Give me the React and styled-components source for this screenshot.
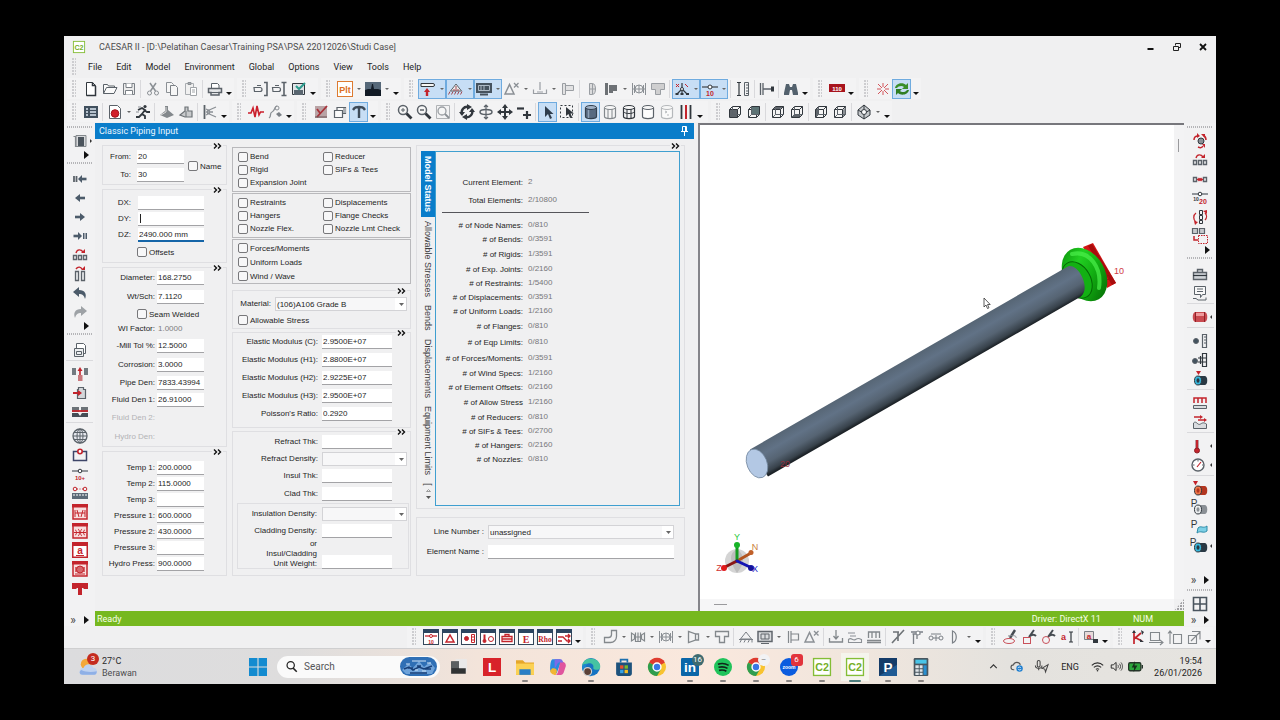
import React from "react";
import styled, { createGlobalStyle, css } from "styled-components";

const c = {
  face: "#f0f0f1",
  ink: "#1e1e1e",
  line: "#dcdcdf",
  blue: "#0a7dca",
  green: "#76b81f",
  red: "#c3242c",
  steel: "#5b6269",
  dark: "#31373d",
};
const ui = `Roboto, "Noto Sans", sans-serif`;
const form = `"Liberation Sans", Arial, sans-serif`;

const Global = createGlobalStyle`
  *, *::before, *::after { box-sizing: border-box; }
  body { margin: 0; background: #000; font-family: ${ui}; font-size: 9px; color: ${c.ink}; }
  button, input, select { font: inherit; color: inherit; margin: 0; }
  button { border: 0; background: none; padding: 0; }
`;

/* ---------- icon drawings, 16 x 16 ---------- */
const P = (d, stroke = c.steel, w = 1, fill = "none") => (
  <path d={d} stroke={stroke} strokeWidth={w} fill={fill} />
);
const F = (d, fill = c.steel) => <path d={d} fill={fill} stroke="none" />;
const O = (cx, cy, r, stroke = c.steel, fill = "none", w = 1) => (
  <circle cx={cx} cy={cy} r={r} stroke={stroke} fill={fill} strokeWidth={w} />
);
const T = (x, y, size, fill, text, weight = 700, family = form) => (
  <text x={x} y={y} fontSize={size} fill={fill} fontWeight={weight} fontFamily={family} textAnchor="middle" stroke="none">{text}</text>
);
const cube = (shade) => (
  <>
    {P("M2.500 5.500h8v8h-8zM2.500 5.500l3-3h8l-3 3M13.500 2.500v8l-3 3", c.dark, 1, "#f4f4f4")}
    {shade === "front" && F("M3 6h7v7H3z", "#5f656b")}
    {shade === "back" && F("M6 3h7v7H6z", "#5d7375")}
    {shade === "top" && F("M3 5l3-2h7l-3 2z", "#5f656b")}
    {shade === "bottom" && F("M3 13l2.500-3h7.500l-3 3z", "#5f656b")}
    {shade === "left" && F("M3 6l2.500-3v7L3 13z", "#5f656b")}
    {shade === "right" && F("M11 6l2.500-3v7L11 13z", "#8b9095")}
    {P("M5.500 3v7.500h8M5.500 10.500l-3 3", c.steel, 1)}
  </>
);
const cylinder = (fill, stroke, extra) => (
  <>
    {P("M2.500 3.500v9c0 2.700 11 2.700 11 0v-9", stroke, 1.200, fill)}
    <ellipse cx="8" cy="3.500" rx="5.500" ry="2" stroke={stroke} fill={fill === "#586a80" ? "#9fb0c4" : "#f7f7f7"} />
    {extra}
  </>
);
const lens = (extra) => (
  <>
    {O(6, 6, 4.500, c.steel, "#f6f6f6", 1.500)}
    {P("M9.500 9.500L14.500 14.500", c.dark, 2.800)}
    {extra}
  </>
);
const framed = (inner) => (
  <>
    <rect x="0.500" y="0.500" width="15" height="15" fill="#fff" stroke="#33475a" />
    {F("M0 0h16v4H0z", "#2c4560")}
    {inner}
  </>
);
const redFrame = (inner) => (
  <>
    <rect x="1" y="1" width="14" height="14" fill="#f8dede" stroke={c.red} strokeWidth="1.500" />
    {F("M0 0h16v3.500H0z", c.red)}
    {inner}
  </>
);
const can = (body, face) => (
  <>
    {F("M6 5h7c3 0 3 9 0 9H6z", body)}
    <ellipse cx="6" cy="9.500" rx="3.500" ry="4.500" fill={face} stroke={c.dark} />
    <ellipse cx="6" cy="9.500" rx="1.500" ry="2.200" fill={body} />
  </>
);

const icons = {
  fresh: <>{P("M3.500 1.500h6l3 3v10h-9z", c.dark, 1, "#fff")}{P("M9.500 1.500v3h3M12.500 5v9.500h-9", c.dark, 1.500)}</>,
  open: <>{P("M1.500 12.500v-9h4l1 1.500h6v2M1.500 12.500l3-6h10.500l-3 6z", c.steel, 1, "#fafafa")}</>,
  save: <>{P("M2.500 2.500h11v11h-11z", "#7b8086", 1, "#ececec")}{P("M5 2.500v4h6v-4M4.500 13.500v-4h7v4", "#7b8086", 1, "#fff")}</>,
  cut: <>{P("M5 2l5.500 8M11 2L5.500 10", "#8b9095", 1.500)}{O(4.500, 12, 2, "#8b9095")}{O(11.500, 12, 2, "#8b9095")}</>,
  copy: <>{P("M2.500 1.500h5l2 2v8h-7z", "#8b9095", 1, "#f6f6f6")}{P("M6.500 4.500h5l2 2v8h-7z", "#7b8086", 1, "#f6f6f6")}</>,
  paste: <>{P("M2.500 2.500h8v11h-8z", "#a9adb1", 1, "#f0f0f0")}{P("M5 1.500h3v2H5z", "#8b9095", 1)}{P("M7.500 6.500h6v8h-6zM9 9h3M9 11h3", "#a0a4a8", 1, "#fff")}</>,
  print: <>{P("M4.500 7V2.500h6l1.500 1.500v3", c.steel, 1, "#fff")}{P("M1.500 7.500h13v4h-2.500v2.500h-8v-2.500H1.500z", c.steel, 1.500, "#e4e6e8")}{P("M4 11.500h8", c.steel)}</>,
  nodeA: <>{P("M1 6.500h6a2 2 0 010 4H1.500zM4 4.500h4", c.steel, 1.200)}{P("M11 1.500h3v13H11", c.steel, 1.600)}</>,
  nodeB: <>{P("M0.500 6.500h6a2 2 0 010 4H1zM3 4.500h4", c.steel, 1.200)}{P("M9.500 1.500h5M9.500 14.500h5M12 1.500v13", c.steel, 1.600)}</>,
  check: <>{P("M1.500 2.500h12v11h-12z", c.dark, 1, "#dfe3e6")}{F("M3 9h9v5H3z", "#5a6670")}{P("M5 5l3 3 6-6", "#2b9c8d", 2)}</>,
  plt: <><rect x="0.500" y="0.500" width="15" height="15" fill="#fff" stroke="#dd7a31" />{T(8, 12, 9, "#dd6f22", "Plt")}</>,
  rig: <>{F("M0 1h16v14H0z", "#566879")}{F("M0 9l3-1 3 0 1-5h1l1 5 4 0 3 1v6H0z", "#121b26")}</>,
  support: <>{P("M1 2.500h12a1.500 1.500 0 010 3H1z", c.dark, 1, "#f6f6f6")}{F("M7 7l3 4H8.200v4H5.800v-4H4z", c.red)}</>,
  anchor: <>{P("M8 3l5.500 7h-11z", c.steel, 1, "#eee")}{P("M2 10.500l-1.500 3M5 10.500l-1.500 3M8 10.500l-1.500 3M11 10.500l-1.500 3M14 10.500l-1.500 3M8 5v5M6 8v2M10 8v2", "#a04852", 1)}</>,
  display: <>{F("M0 2h16v10H0z", "#46535f")}{P("M2.500 4.500h11v5h-11zM5 4v6M8 4v6", "#aebbc7", 1)}{P("M4 13.500h8", "#46535f", 2)}</>,
  delta: <>{P("M1 13l4.500-9.500L10 13z", "#8b9095", 1.500)}{P("M10 2l4.500 4.500M14.500 2l-4.500 4.500", "#8b9095", 1.300)}</>,
  hanger: <>{P("M8 1v8M1.500 8.500v4h13v-4M5 11h6", "#9a9ea3", 1.200)}</>,
  tee: <>{P("M2.500 2.500h3v11h-3zM5.500 4.500h8v5h-8z", "#9a9ea3", 1, "#e2e2e3")}</>,
  disc: <>{P("M5.500 2.500h3c4 0 4 11 0 11h-3z", "#9a9ea3", 1, "#dcdcdd")}{P("M5.500 8h6M8.500 2.500v11", "#9a9ea3")}</>,
  elbow: <>{F("M2 2h3v12H2zM6 4h8v6h-4v2H6z", "#6d7175")}</>,
  joint: <>{P("M1.500 2v12M14.500 2v12M3.500 4v8M12.500 4v8", "#8b9095")}{O(8, 8, 4, "#8b9095")}{P("M4 8h8M8 4v8M2 8h1M13 8h1", "#8b9095")}</>,
  teeDown: <>{P("M1.500 2.500h13v6h-4v5h-5v-5h-4z", "#9a9ea3", 1, "#cfcfd0")}</>,
  axes: <>{P("M8 8V2M8 8l-5 5M8 8l5 5M8 8v5", c.dark, 1.200)}{O(8, 8, 1.500, c.dark, "#fff")}{P("M2 3l3 3M5 3L2 6M11 3l3 3", c.red, 1)}{F("M6.500 12h3v2h-3zM1.500 12h3v2h-3zM12 12h3v2h-3z", c.dark)}</>,
  node: <>{P("M0 6h16", c.steel, 1.500)}{O(8, 6, 2, c.dark, "#fff")}{T(8, 15, 7, c.red, "10")}</>,
  ruler: <>{P("M2 1.500h4M2 14.500h4M4 2v12", c.dark, 1.200)}{P("M9.500 1.500h4v13h-4zM11 4h2.500M11 7h2.500M11 10h2.500M11 12.500h2.500", c.steel)}</>,
  valve: <>{P("M1.500 2v12M4 2v12M4 8h9", c.steel, 1.300)}{F("M12 5.500h3v5h-3z", c.dark)}</>,
  find: <>{F("M3 3h3l1 3h2l1-3h3l2 9v2h-5l-1-5H7l-1 5H1v-2z", "#53616d")}</>,
  plate: <>{F("M0 3h16v8H0z", "#a8141d")}{T(8, 9.500, 6, "#fff", "110")}</>,
  burst: <>{P("M8 2v4M8 10v4M2 8h4M10 8h4M3 3l4 4M9 9l4 4M13 3L9 7M7 9l-4 4", "#d3545a", 1)}</>,
  refresh: <>{F("M1 7c1-5 8-6 11-3l2-2v6H8l2-2C8 4 4 5 3 7z", "#3b8f2a")}{F("M15 9c-1 5-8 6-11 3l-2 2V8h6l-2 2c2 2 6 1 7-1z", "#2f7d22")}</>,
  list: <>{F("M1 2h14v12H1z", "#41505e")}{P("M3 5h2M7 5h6M3 8h2M7 8h6M3 11h2M7 11h6", "#dbe6f2", 1.300)}</>,
  record: <>{P("M2.500 1.500h8l3 3v10h-11z", c.steel, 1, "#fff")}{O(8, 9.500, 3.800, "#a3141c", "#d21f2a")}</>,
  run: <>{O(10, 2.500, 1.600, "none", c.dark)}{P("M3 6l4-2 3 2-3 4 3 2v3M7 10l-3 3H1M9 6l3 2h3", c.dark, 1.800)}{P("M6 3H3M4 8H1", "#8b9095", 1.200)}</>,
  hopper: <>{F("M6 2h3v4l6 5-7 3-7-3 5-4z", "#83888c")}{P("M7 3v5l-5 3", "#d8d8d8")}</>,
  hopperB: <>{P("M2 11l5-4V3h3v4h4v6H7z", "#6d7276", 1.200, "#c8cacc")}{P("M8 7v6", "#6d7276")}</>,
  brush: <>{P("M2.500 1v14", c.steel, 1.800)}{P("M4 8h7M5 7l9-4M5 9l9 4M4 5l4 2M4 11l4-2", "#8b9095", 1.300)}</>,
  pulse: <>{P("M0 9h3l2-5 2 9 2-11 2 9 1.500-3H16", "#cb1f2c", 1.600)}</>,
  probe: <>{P("M2 14c3-2 0-5 3-6s2-5 5-6", "#8b9095", 1.300)}{O(10, 4, 2, "#8b9095")}{F("M9 10l3-2 3 3-3 2z", "#7b8086")}</>,
  sketch: <>{F("M2 2h12v12H2z", "#b9a4a6")}{P("M4 13L14 2M4 5l3 4", "#a8323a", 1.800)}{P("M2 13h12", "#6b5557")}</>,
  boxes: <>{P("M2.500 6.500h8v7h-8zM5 6.500V3.500h8.500v6h-3", c.steel, 1.200, "#fafafa")}{F("M11 4h3v5h-3z", "#a9adb1")}</>,
  tpost: <>{P("M2 6c2-3 3-3 6-3s4 0 6 3M8 3v11", "#3d4a58", 2.400)}</>,
  zoomFit: lens(P("M4 6h4M6 4v4", c.steel)),
  zoomOut: lens(P("M4 6h4", c.steel, 1.500)),
  zoomBox: <>{P("M1.500 1.500h13v13h-13z", "#b0b3b6", 1)}{O(7, 7, 4, "#9a9ea3", "#f6f6f6", 1.300)}{P("M10 10l4 4", "#8b9095", 1.800)}</>,
  rotate: <>{P("M3 10A5.500 5.500 0 019 2.800M13 6a5.500 5.500 0 01-6 7.200", c.dark, 2.400)}{F("M8 0l5 3-5 3zM8 10l-5 3 5 3zM0 8h6L3 12zM16 8h-6l3-4z", c.dark)}</>,
  spin: <>{P("M8 1v14M6 3l2-2 2 2M6 13l2 2 2-2", c.steel, 1.200)}<ellipse cx="8" cy="8" rx="6" ry="2.500" stroke={c.steel} strokeWidth="1.500" /></>,
  move: <>{P("M8 3v10M3 8h10", c.dark, 2)}{F("M8 0l3 4H5zM8 16l3-4H5zM0 8l4-3v6zM16 8l-4-3v6z", c.dark)}</>,
  plusMinus: <>{P("M1 4.500h7", c.dark, 2.200)}{P("M7 11h8M11 7v8", c.dark, 2.200)}</>,
  pointer: <>{F("M5 2v11l3-3 2 5 2-1-2-4h3.500z", "#2f3d4c")}</>,
  marquee: <><rect x="1.500" y="1.500" width="12" height="12" stroke={c.dark} strokeDasharray="2 2" />{F("M7 3v9l2.500-2 1.500 4 2-1-1.500-3.500H15z", c.dark)}</>,
  shaded: cylinder("#586a80", "#34414f", P("M5.500 6v8", "#8fa2b8", 1.500)),
  hidden: cylinder("#f4f4f4", "#83888c", P("M6 5v9M10 5v9", "#83888c")),
  wire: cylinder("none", c.dark, P("M6 5v9M10 5v9M3 8c1 2 9 2 10 0", c.dark)),
  outline: cylinder("#fdfdfd", c.steel, null),
  ghost: cylinder("#fafafa", "#b5b8bb", P("M6 7l2 1-2 1M8 11h2", "#b5b8bb")),
  bars: <>{P("M3.500 1v14M12.500 1v14", c.dark, 1.800)}{P("M8 1v14", c.red, 2)}</>,
  cubeFront: cube("front"),
  cubeBack: cube("back"),
  cubeTop: cube("top"),
  cubeBottom: cube("bottom"),
  cubeLeft: cube("left"),
  cubeRight: cube("right"),
  iso: <>{P("M8 1l6 5v5l-6 4-6-4V6z", c.dark, 1, "#c6c9cc")}{O(8, 8, 2.500, c.dark, "#fff")}{P("M8 1v4M2 6l3.500 2M14 6l-3.500 2M8 11v4", c.dark)}</>,

  column: <>{P("M4 2.500h10v11H4z", "#83888c", 1, "#d6d8da")}{F("M6 4h6v9H6z", "#4b545c")}{P("M1.500 3.500h2v10h8", "#83888c", 1.200)}</>,
  first: <>{P("M2 5v6M4.500 5v6", c.steel, 1.800)}{P("M8 8h6.500", "#4c5b6a", 2.600)}{F("M6 8l4-4v8z", "#4c5b6a")}</>,
  prev: <>{P("M6 8h7", "#4c5b6a", 2.600)}{F("M3 8l5-4v8z", "#4c5b6a")}</>,
  next: <>{P("M3 8h6", "#4c5b6a", 2.600)}{F("M13 8L8 4v8z", "#4c5b6a")}</>,
  last: <>{P("M1.500 8H8", "#4c5b6a", 2.600)}{F("M10 8L6 4v8zM11 5h1.500v6H11zM13.500 5H15v6h-1.500z", "#4c5b6a")}</>,
  insert: <>{P("M1.500 8.500h3v4h-3zM6.500 8.500h3v4h-3zM11.500 8.500h3v4h-3z", c.steel, 1.400)}{P("M4 6c1-4 5-4 7-1", c.red, 1.400)}{F("M9 6h4V2z", c.red)}</>,
  double: <>{P("M3.500 5.500h3v9h-3zM9.500 5.500h3v9h-3z", c.steel, 1.300, "#eceeef")}{P("M4 3c2-3 5-2 6 0", c.red, 1.400)}{F("M9 4h4V0z", c.red)}</>,
  undo: <>{F("M1 7l6-5v3c6 0 8 4 6 9-1-4-3-5-6-5v3z", "#4c5b6a")}</>,
  redo: <>{F("M15 7L9 2v3c-6 0-8 4-6 9 1-4 3-5 6-5v3z", "#9ea2a6")}</>,
  report: <>{P("M4.500 1.500h7l2 2v8h-9z", c.steel, 1, "#fff")}{P("M2.500 6.500h9v8h-9zM4.500 9.500h5v3h-5z", c.steel, 1, "#eceeef")}</>,
  breakEl: <>{F("M0 2h4v7H0zM12 2h4v7h-4z", "#737a80")}{F("M6 9h4.500v6H6z", "#c9787c")}{P("M8 9V4", c.red, 1.600)}{F("M8 1l2.500 4h-5z", c.red)}</>,
  importDb: <>{P("M6.500 2.500h5v2h2v9h-8v-9h1z", c.steel, 1.200, "#d4d7da")}{F("M1 7h5V5l4 3-4 3V9H1z", c.red)}</>,
  splitPipe: <>{F("M0 3h7v5H0zM9 3h7v5H9z", "#6d7378")}{P("M0 7h16", c.red, 1.800)}{F("M0 9h6l2 3 2-3h6v4H0z", "#454d55")}</>,
  globe: <>{O(8, 8, 7, c.steel, "#e6e8ee", 1.300)}<ellipse cx="8" cy="8" rx="3" ry="7" stroke={c.steel} />{P("M1 8h14M2 4.500h12M2 11.500h12M8 1v14", c.steel)}</>,
  loop: <>{P("M1.500 4.500h13v9h-13z", "#3d4568", 1.500)}{O(8, 4.500, 2.200, c.red, "#fff", 1.600)}</>,
  node10: <>{P("M0 5h16", c.steel, 1.300)}{O(8, 5, 1.800, c.dark, "#fff")}{T(8, 14, 6, c.red, "10+")}</>,
  range: <>{O(3, 4, 1.800, c.red)}{O(13, 4, 1.800, c.red)}{P("M5 4h1M7.500 4h1M10 4h1", c.red)}{F("M0 8h16v6H0z", "#5b6977")}{P("M2 9v2M5 9v2M8 9v2M11 9v2M14 9v2", "#fff")}</>,
  rfJoint: redFrame(P("M3 6v7M13 6v7M5 6l2 7M11 6L9 13M3 9h10", c.red)),
  rfBellow: redFrame(<>{P("M3 7c2 0 2 5 0 5M13 7c-2 0-2 5 0 5M6 6c2 1 2 6 0 7M10 6c-2 1-2 6 0 7M2 9.500h12", c.red)}</>),
  rfAlpha: <><rect x="0.750" y="0.750" width="14.500" height="14.500" fill="#fff" stroke={c.red} strokeWidth="1.500" />{F("M0 0h16v4H0z", c.red)}{T(8, 12, 10, c.red, "a")}{P("M4 13.500h8", c.red)}</>,
  rfSheet: redFrame(<>{F("M3 6h10v5H3z", "#d5666b")}{O(8, 8.500, 3.500, c.red, "#d5666b")}{P("M3 13h10", c.red)}</>),
  redTee: <>{F("M0 3h16v6h-4.500v-1H10v7H6V8H4.500v1H0z", c.red)}</>,

  orbit: <>{P("M2 7c0-3 2-4 4-4M14 7c0-3-1-4-3-5M6 14c2 1 4 1 5-1", c.red, 1.500)}{F("M5 0l3 3-3 2zM9 1h4v4zM10 11h3v4z", c.red)}{O(9, 8, 3, c.dark, "#8b9095")}</>,
  gap: <>{P("M1.500 6.500h3v4h-3zM11.500 6.500h3v4h-3z", c.steel, 1.400)}{P("M5 8.500h6M6.500 7l3 3M9.500 7l-3 3", c.red, 1.300)}</>,
  renumber: <>{P("M0 4h16", c.steel, 1.300)}{O(8, 4, 1.800, c.dark, "#fff")}{T(4, 11, 5, c.dark, "10")}{T(11, 14, 7, c.red, "20")}</>,
  flip: <>{P("M7.500 1.500h3v4h-3zM7.500 6.500h3v4h-3zM7.500 11.500h3v3h-3z", c.dark, 1)}{P("M4 4c-3 2-3 7 0 9M13 4c2 2 2 5 0 7", c.red, 1.300)}{F("M2 12l4 1-3 3zM11 2l4-1v4z", c.red)}</>,
  group: <>{P("M0.500 0.500h5v5h-5zM7.500 0.500h5v5h-5z", c.steel, 1.200, "#c6c9cc")}<rect x="6.500" y="7.500" width="9" height="8" stroke={c.red} strokeDasharray="1.500 1" />{P("M2 8v4h4", c.red, 1.500)}</>,
  toolbox: <>{P("M1.500 6.500h13v7h-13zM5.500 6V3.500h5V6", c.steel, 1.400, "#cfd3d7")}{P("M1 9.500h14", c.dark, 1.200)}</>,
  comment: <>{P("M2.500 1.500h11v8h-3l-2 3v-3h-6zM5 4h6M5 6.500h6", c.steel, 1, "#f8f8f8")}{P("M1 13.500h3l2 1.500h8v-2.500", c.steel)}</>,
  tank: <>{F("M3 3h10c3 1 3 9 0 10H3C0 12 0 4 3 3z", "#c94a50")}{F("M4 4h8v3H4z", "#ee9a9c")}{P("M3.500 3v10M12.500 3v10", "#8f2228")}</>,
  scaleA: <>{O(4, 8, 2.500, c.steel, "#43525e")}{P("M10.500 1.500h4v13h-4zM12 4h2M12 7h2M12 10h2", c.steel, 1.200)}</>,
  scaleB: <>{O(3, 9, 2.500, c.steel, "#43525e")}{P("M10.500 1.500h4v13h-4zM6 6h8M6 10h8M8.500 4v8", c.dark, 1.200)}</>,
  canBlue: <>{can("#2a3944", "#37b7dc")}{F("M4 0h5L6.500 4z", c.red)}</>,
  uniform: <>{P("M2 8V3h12v5M6 3v5M10 3v5M2 3h12", c.red, 1.500)}{P("M1.500 10.500h13v3h-13z", c.steel, 1, "#d9dcdf")}</>,
  wave: <>{P("M2 3h7M6 6h7", c.red, 1.300)}{F("M8 1l3 2-3 2zM12 4l3 2-3 2z", c.red)}{P("M1.500 9c3-3 4 3 7 1s4-1 6 0v4.500h-13z", c.steel, 1, "#d9dcdf")}</>,
  thermo: <>{P("M5 2v9", "#b8bcc0", 4)}{P("M5 2v9", c.red, 2.400)}{O(5, 12.500, 2.500, "#8f2228", c.red)}</>,
  gauge: <>{O(6, 8, 6, c.steel, "#fff", 1.400)}{P("M5 10l4-5", c.red, 1.200)}{P("M1 8h1.500M6 3v1.500M10 8h1", c.steel)}</>,
  canRed: <>{can("#b33620", "#ef7648")}{F("M1 0h5L3.500 4.500z", c.red)}</>,
  canP: <>{can("#8b9095", "#eceeef")}{T(2, 7, 10, c.dark, "P", 400)}</>,
  flowP: <>{P("M6 9c3-3 5 1 9-2v5c-4 3-6-1-10 2z", "#2f8ca8", 1, "#7ed0e6")}{T(2, 9, 10, c.dark, "P", 400)}</>,
  canBlueP: <>{can("#2a3944", "#37b7dc")}{T(1, 8, 10, c.dark, "P", 400)}</>,
  windows: <>{P("M1.500 1.500h13v13h-13zM8 1.500v13M1.500 8h13", "#4a545e", 1.600)}</>,

  fNode: framed(<>{P("M2 7h12", c.red, 1.300)}{O(8, 7, 1.500, c.red, "#fff")}{T(8, 15, 5, c.red, "10")}</>),
  fDelta: framed(P("M4 13l4-7 4 7z", c.red, 1.500)),
  fDot: framed(<>{O(5.500, 9.500, 2, c.red, c.red)}{P("M10.500 5.500h3v8h-3zM10 8h3M10 11h3", c.red)}</>),
  fTemp: framed(<>{P("M4.500 5.500v6", c.red, 2)}{O(4.500, 12, 1.500, c.red, c.red)}{O(11, 10, 2.500, c.red)}</>),
  fBox: framed(P("M3 7.500h10v5H3zM6 7V5.500h4V7M3 10h10", c.red, 1.300)),
  fE: framed(T(8, 14, 10, c.red, "E", 700, "'Liberation Serif', serif")),
  fRho: framed(T(8, 12.500, 7.500, c.red, "Rho", 700, "'Liberation Serif', serif")),
  fFlow: framed(P("M2 8h5l4 4h3M2 12h4M9 7h5M12 5l2 2-2 2M12 10l2 2-2 2", c.red, 1.300)),
  bend: P("M9.500 1.500h5v6a6 6 0 01-6 6h-6v-5h4c2 0 3-1 3-3z", "#83888c", 1.300),
  bellows: <>{P("M1.500 4v8l3-2V6zM14.500 4v8l-3-2V6zM5.500 3.500v9h5v-9M8 3.500v9M4.500 8h7", "#83888c", 1.200)}</>,
  reducer: P("M2.500 2.500v11l7-2.500V5zM9.500 5h3v6h-3", "#83888c", 1.300),
  teePipe: P("M1.500 2.500h13v5h-4v6h-5v-6h-4z", "#83888c", 1.300),
  restraint: <>{P("M8 3l5.500 7h-11zM1 10.500h14M2 13.500l1.500-3M6 13.500l1.500-3M10 13.500l1.500-3M14 13.500v-3", "#7b8086")}</>,
  sheet: <>{P("M1 2.500h14v10H1z", "#60666c", 1.500, "#d9dbde")}{P("M4 5h8v5H4zM8 5v5M4 14.500h8", "#60666c")}</>,
  flange: P("M3.500 2v12M6 2v12M6 5h7.500v6H6", "#83888c", 1.200),
  force: P("M8 1v8M5.500 7l2.500 3 2.500-3M1.500 9v4h13V9", "#83888c", 1.300),
  windP: P("M1 4h7M3 7h6M1.500 13.500v-3c3-3 4 2 7 0s4-1 6 0v3z", "#8b9095", 1.100),
  uniP: P("M2.500 9V3h11v6M6 3v6M10 3v6M1 11.500h14M1 13.500h14", "#83888c", 1.300),
  cutLine: P("M2 14L14 1M3 3h6M8 3v9", "#6d7276", 1.600),
  nozzle: <>{P("M2 3h12M3.500 5h8M4.500 5v10M8 5v5", "#7b8086", 1.300)}{O(9, 4, 2, "#7b8086", "#fff")}</>,
  link: <>{O(3, 9, 2, "#7b8086")}{O(13, 9, 2, "#7b8086")}{P("M5 9h6M8 6v6M3 5h10", "#7b8086")}</>,
  paren: P("M5.500 2c5 2 5 10 0 12z", "#7b8086", 1.200),
  penA: <>{P("M8 9l5-8", "#454b51", 2.400)}{P("M6 7c6-1 9 0 8 2", "#8b9095")}<ellipse cx="7" cy="12" rx="5.500" ry="2.500" stroke="#c9505a" /></>,
  penB: <>{P("M8 8l5-7M9 7c3-2 5-1 6 0", "#454b51", 2)}<rect x="2.500" y="8.500" width="7" height="6" stroke="#c9505a" /></>,
  penC: <>{P("M8 8l5-7M9 7c3-2 5-1 6 0", "#454b51", 2)}{O(6, 11, 3.500, "#c9505a")}</>,
  textCur: <>{T(4.500, 11, 9, c.red, "a")}{P("M10 3h4M10 13h4M12 3v10", c.dark, 1.200)}</>,
  note: <>{P("M1.500 2.500h9v8h-9z", "#7b8086", 1, "#e7dada")}{T(6, 9.500, 8, c.red, "a")}{F("M10 10h5v4h-5z", c.dark)}</>,
  redAxes: <>{P("M5 15V2M5 10l7-6M5 8l8 4", c.red, 1.700)}{F("M3 4l2-3 2 3zM12 1l3 2-2 3zM11 10l4 3h-4z", c.dark)}</>,
  stretchH: P("M2.500 3.500h9v8h-9zM1 13.500h14M12 11l3 2.500-3 2.500", "#83888c", 1.100),
  stretchV: P("M6.500 5.500h8v9h-8zM3 15V2M1 4.500L3 2l2 2.500", "#83888c", 1.100),
  scale: P("M2.500 6.500h8v8h-8zM6 2.500h8v8M5 12l9-9M10 2.500h4v4", "#83888c", 1.100),

  c2: <><rect x="0.500" y="0.500" width="15" height="15" fill="#fff" stroke="#84bd36" strokeWidth="1.200" />{T(8, 11.500, 9.500, "#74ae27", "C2")}</>,
  win: <>{F("M0 0h7.500v7.500H0zM8.500 0H16v7.500H8.500zM0 8.500h7.500V16H0zM8.500 8.500H16V16H8.500z", "#138bd0")}</>,
  taskView: <>{F("M5 1h10v11H5z", "#e9e9e9")}{F("M1 3h7v6h6v5H1z", "#303334")}{F("M1 3h7v6H1z", "#5b5f61")}</>,
  ell: <><rect width="16" height="16" fill="#d8232a" />{T(8, 12.500, 12, "#fff", "L")}</>,
  folder: <>{F("M0 2h6l2 2h8v11H0z", "#e5a72b")}{F("M0 5h16v10H0z", "#fbd154")}{F("M3 10h10v5H3z", "#2a7ec6")}</>,
  copilot: <>{F("M3 1h6c2 0 2 2 1 4L7 13c-1 2-5 1-6-2 0-3 0-9 2-10z", "#2b8be0")}{F("M10 3c3 0 5 1 5 4l-2 6c-1 2-2 2-5 2H6c2-1 2-3 4-12z", "#e0559e")}{F("M3 9c2 0 4 0 4 3l-1 3c-3 0-5-2-5-4z", "#f2b632")}{F("M5 1h5c2 0 2 2 3 3H9C7 4 7 8 5 9z", "#7b6be8")}</>,
  edge: <>{O(8, 8, 8, "none", "#1673c2")}{F("M0 8C0 2 6-1 11 1c4 1 6 5 5 8-1 2-5 2-6 0 1-3-2-5-5-4-3 0-5 1-5 3z", "#45c3a2")}{F("M5 5c-4 3-2 10 4 11-6 1-9-4-9-8 0-2 3-3 5-3z", "#1b87cf")}{O(5, 12, 3.500, "#d3d3d3", "#5b4138")}</>,
  store: <>{F("M1 4h14v10c0 1-1 2-2 2H3c-1 0-2-1-2-2z", "#1d527c")}{P("M5 4V1.500h6V4", "#1d6fae", 1.500)}{F("M4.500 6.500h3v3h-3z", "#e9512c")}{F("M8.500 6.500h3v3h-3z", "#7db928")}{F("M4.500 10.500h3v3h-3z", "#39a3e4")}{F("M8.500 10.500h3v3h-3z", "#f7bd21")}</>,
  chrome: <>{O(8, 8, 8, "none", "#f8c330")}{F("M8 8L1 4a8 8 0 0114 0z", "#df3b30")}{F("M1 4a8 8 0 007 12l3.500-6L8 8z", "#2f9e4f")}{O(8, 8, 3.500, "#fff", "#3977e5", 1.300)}</>,
  linkedin: <><rect width="16" height="16" rx="1" fill="#0b66a8" />{T(8, 12.500, 12, "#fff", "in")}</>,
  spotify: <>{O(8, 8, 8, "none", "#20c35b")}{P("M3.500 5.500c3-1 7-.5 9.500 1M4 8.300c3-.8 6-.3 8 1M4.500 11c2-.6 5-.2 6.500.800", "#10251a", 1.400)}</>,
  zoomApp: <>{O(8, 8, 8, "none", "#0b5cdf")}{T(8, 10, 4.500, "#fff", "zoom")}</>,
  papp: <><rect width="16" height="16" fill="#143b68" />{F("M0 16L16 6v10z", "#1f5a94")}{T(8, 12.500, 12, "#fff", "P")}</>,
  calc: <><rect x="1.500" width="13" height="16" rx="1" fill="#49565f" />{F("M3 1.500h10V5H3z", "#49c4e8")}{F("M3 6.500h3V9H3zM6.800 6.500h2.600V9H6.800zM3 10h3v2.300H3zM6.800 10h2.600v2.300H6.800zM3 13.200h3V15H3zM6.800 13.200h2.600V15H6.800z", "#dfe5e9")}{F("M10.200 6.500H13V15h-2.800z", "#2a8fd0")}</>,
  up: P("M4 10l4-4 4 4", "#333", 1.400),
  sync: <>{P("M4 12H3a3 3 0 010-6 4.500 4.500 0 018.500 0", "#555", 1.400)}{O(10.500, 10.500, 4, "none", "#1f7fd0")}{P("M8.500 10a2 2 0 013.500-.5M12.500 11a2 2 0 01-3.500.5", "#fff", 1)}</>,
  mic: <>{P("M3.500 3a1.500 1.500 0 013 0v4a1.500 1.500 0 01-3 0zM1.500 7c0 4 7 4 7 0M5 10v2", "#444", 1.100)}{P("M15 6L8.500 10l3 .8.800 3z", "#444", 1.100)}</>,
  wifi: <>{P("M1 6.500c4-4 10-4 14 0M3.500 9c3-2.500 6-2.500 9 0M6 11.500c1.300-1 2.700-1 4 0", "#2b2b2b", 1.400)}{O(8, 13.300, 1, "none", "#2b2b2b")}</>,
  sound: <>{P("M1.500 6h2.500l3.500-3v10L4 10H1.500z", "#2b2b2b", 1.200)}{P("M9.500 6c1 1 1 3 0 4M11.500 4.500c2 2 2 5 0 7M13.500 3c2.500 3 2.500 7 0 10", "#2b2b2b", 1)}</>,
  battery: <><rect x="0.700" y="4" width="13" height="8.500" rx="1.500" fill="#2ca53c" stroke="#26352a" strokeWidth="1.400" />{F("M14.500 6.500H16v3.500h-1.500z", "#26352a")}{F("M7.500 2L4 9h2.500L6 14l4-7H7z", "#17301c")}</>,
  weather: <>{O(6, 6, 4.500, "none", "#f3a83a")}{F("M3 15c-4 0-3-6 1-6 1-4 7-4 8 0 4 0 4 6 1 6z", "#bfd2f0")}{F("M3 15c-3 0-3-3-1-4 4 2 9 2 13 1 0 2-1 3-2 3z", "#8fb0e6")}</>,
  magnifier: <>{O(7, 6.500, 4.500, "#222", "none", 1.500)}{P("M10 10l4.500 4.500", "#222", 1.800)}</>,
};

const Svg = styled.svg`
  display: block;
  flex: none;
  width: ${(p) => p.$size}px;
  height: ${(p) => p.$size}px;
  overflow: visible;
`;
const Icon = ({ name, size = 16 }) => (
  <Svg viewBox="0 0 16 16" $size={size} fill="none" aria-hidden="true">{icons[name]}</Svg>
);

/* ---------- frame ---------- */
const Page = styled.div`
  min-height: 100vh;
  padding: 36px 5vw;
  display: flex;
  flex-direction: column;
  background: #000;
`;
const Window = styled.div`
  flex: 1;
  display: flex;
  flex-direction: column;
  background: ${c.face};
  overflow: hidden;
`;
const TitleBar = styled.header`
  height: 21px;
  display: flex;
  align-items: center;
  padding: 0 6px 0 9px;
  gap: 14px;
  color: #4c4c4c;
`;
const Title = styled.h1`
  flex: 1;
  margin: 0;
  font-size: 9px;
  font-weight: 400;
`;
const WindowButtons = styled.div`
  display: flex;
  gap: 12px;
`;
const WindowButton = styled.button`
  width: 14px;
  height: 14px;
  display: grid;
  place-items: center;
`;
const MenuBar = styled.nav`
  height: 20px;
  display: flex;
  align-items: center;
  padding-left: 3px;
`;
const MenuItem = styled.button`
  padding: 0 7px;
  line-height: 18px;
`;

/* ---------- toolbars ---------- */
const ToolRow = styled.div`
  height: ${(p) => p.$height || 23}px;
  display: flex;
  align-items: center;
  padding: 0 3px;
  justify-content: ${(p) => (p.$end ? "flex-end" : "flex-start")};
`;
const ToolGroup = styled.div`
  display: flex;
  align-items: center;
  height: 21px;
  margin-right: 3px;
  padding-right: ${(p) => (p.$wide ? 3 : 0)}px;
  background: #f3f3f4;
  ${(p) => p.$last && css`margin-right: 0;`}
`;
const Handle = styled.span`
  flex: none;
  width: 14px;
  height: 18px;
  background: radial-gradient(circle at 1px 1px, #cdcdd0 1px, transparent 1px) 5px 0 / 3px 3px;
  background-clip: content-box;
  padding: 0 5px;
`;
const ToolButton = styled.button`
  flex: none;
  width: ${(p) => (p.$split ? 28 : 19)}px;
  height: 20px;
  display: flex;
  align-items: center;
  justify-content: center;
  gap: 4px;
  border: 1px solid ${(p) => (p.$on ? "#6fabdf" : "transparent")};
  background: ${(p) => (p.$on ? "#c7def5" : "transparent")};
`;
const Divider = styled.span`
  flex: none;
  width: 5px;
  height: 18px;
  background: linear-gradient(#d9d9dc, #d9d9dc) center / 1px 100% no-repeat;
`;
const Overflow = styled.button`
  flex: none;
  width: 10px;
  height: 20px;
  display: flex;
  align-items: flex-end;
  justify-content: center;
  padding-bottom: 4px;
`;
const Tri = ({ w = 6, h = 3, d = "M0 0h6L3 3z", fill = "#111" }) => (
  <svg width={w} height={h} viewBox={`0 0 ${w} ${h}`} aria-hidden="true"><path d={d} fill={fill} /></svg>
);
const RightTri = () => <Tri w={5} h={8} d="M0 0l5 4-5 4z" />;

const Tools = ({ items, last, wide }) => (
  <ToolGroup $last={last} $wide={wide}>
    <Handle />
    {items.split(" ").map((raw, i) => {
      if (raw === "|") return <Divider key={i} />;
      if (raw === "v") return <Overflow key={i} aria-label="More tools"><Tri /></Overflow>;
      const name = raw.replace(/[*>]/g, "");
      const split = raw.includes(">");
      return (
        <ToolButton key={i} $on={raw.includes("*")} $split={split} aria-label={name}>
          <Icon name={name} />
          {split && <Tri w={4} h={2} d="M0 0h4L2 2z" fill="#666" />}
        </ToolButton>
      );
    })}
  </ToolGroup>
);

/* ---------- side rails ---------- */
const Rail = styled.aside`
  flex: none;
  width: ${(p) => p.$width}px;
  display: flex;
  flex-direction: column;
  align-items: center;
  background: #f2f2f3;
`;
const RailHandle = styled.span`
  width: 26px;
  height: 8px;
  padding: 3px 0;
  background: repeating-linear-gradient(90deg, #b5b5b8 0 1px, transparent 1px 2px) content-box;
`;
const RailGroup = styled.div`
  width: 27px;
  padding-top: ${(p) => (p.$tight ? 0 : 2)}px;
  display: flex;
  flex-direction: column;
`;
const RailLine = styled.hr`
  width: 27px;
  height: 3px;
  margin: 0;
  border: 0;
  background: linear-gradient(#dadadd, #dadadd) center / 100% 1px no-repeat;
`;
const RailButton = styled.button`
  height: 19px;
  display: grid;
  grid-template-columns: 5px 1fr 5px;
  align-items: center;
  justify-items: center;
  & > svg:first-child { grid-column: 2; }
`;
const RailMore = styled.button`
  align-self: flex-end;
  width: 17px;
  height: 9px;
  display: grid;
  place-items: center;
`;
const RailEnd = styled.div`
  width: 100%;
  height: 13px;
  display: flex;
  align-items: center;
  justify-content: center;
  gap: 8px;
  margin-top: ${(p) => (p.$push ? "auto" : 0)};
  font-size: 12px;
  line-height: 12px;
  color: #444;
`;
const RailTools = ({ items, tight }) => (
  <RailGroup $tight={tight}>
    {items.split(" ").map((raw) => {
      const name = raw.replace(/[<>]/g, "");
      return (
        <RailButton key={raw} aria-label={name}>
          <Icon name={name} />
          {raw.includes(">") && <Tri w={2} h={4} d="M0 0l2 2-2 2z" fill="#333" />}
          {raw.includes("<") && <Tri w={2} h={4} d="M2 0L0 2l2 2z" fill="#333" />}
        </RailButton>
      );
    })}
  </RailGroup>
);
const End = (p) => (
  <RailEnd {...p}><span>»</span><RightTri /></RailEnd>
);

/* ---------- workspace ---------- */
const Main = styled.main`
  flex: 1;
  display: flex;
`;
const Center = styled.div`
  flex: 1;
  min-width: 0;
  display: flex;
  flex-direction: column;
`;
const Work = styled.div`
  flex: 1;
  display: flex;
`;
const StatusBar = styled.footer`
  height: 15px;
  display: flex;
  align-items: center;
  padding: 0 31px 0 2px;
  gap: 32px;
  background: ${c.green};
  color: #f6ffe9;
  & > :first-child { flex: 1; }
`;
const InputPanel = styled.section`
  flex: none;
  padding-right: 4px;
  font-family: ${form};
  font-size: 8px;
`;
const PanelHead = styled.div`
  height: 16px;
  display: flex;
  align-items: center;
  justify-content: space-between;
  padding: 0 6px 0 4px;
  background: ${c.blue};
  color: #eaf6ff;
`;
const PanelTitle = styled.h2`
  margin: 0;
  font: 400 9px ${ui};
`;
const PanelBody = styled.form`
  display: grid;
  grid-template-columns: 125px 179px 269px;
  column-gap: 5px;
  padding: 6px 9px 0 7px;
  align-items: start;
`;
const Column = styled.div`
  display: flex;
  flex-direction: column;
  gap: ${(p) => p.$gap}px;
  padding-top: ${(p) => p.$top || 0}px;
`;
const Box = styled.div`
  position: relative;
  border: 1px solid ${(p) => (p.$strong ? "#b9b9bc" : "#dfdfe2")};
  padding: ${(p) => p.$pad || "0"};
  margin-top: ${(p) => p.$mt || 0}px;
`;
const InnerBox = styled(Box)`
  margin: 0 1px 0 4px;
  padding: 1px 0 3px;
`;
const MoreButton = styled.button`
  position: absolute;
  top: -4px;
  right: 3px;
  width: 11px;
  height: 7px;
  display: grid;
  place-items: center;
  background: ${c.face};
`;
const More = () => (
  <MoreButton type="button" aria-label="Expand">
    <svg width="9" height="6" viewBox="0 0 9 6" fill="none" stroke="#111" strokeWidth="1.400" aria-hidden="true">
      <path d="M1 0.500L3.500 3 1 5.500M5 0.500L7.500 3 5 5.500" />
    </svg>
  </MoreButton>
);
const Row = styled.div`
  display: grid;
  grid-template-columns: ${(p) => p.$cols};
  column-gap: ${(p) => p.$gap}px;
  align-items: center;
  height: ${(p) => p.$h}px;
`;
const Label = styled.label`
  text-align: right;
  white-space: pre-line;
  line-height: 10px;
  color: ${(p) => (p.$off ? "#b3b3b6" : c.ink)};
`;
const Field = styled.input`
  width: 100%;
  min-width: 0;
  height: 14px;
  padding: 0 1px;
  border: 0;
  border-bottom: ${(p) => (p.$focus ? "2px solid #1565a8" : "1px solid #a3a3a6")};
  border-radius: 0;
  background: #fff;
  font: 8px ${form};
  color: ${c.ink};
  outline: none;
  ${(p) => p.$caret && css`background: #fff linear-gradient(#222, #222) 2px 2px / 1px 9px no-repeat;`}
  ${(p) => p.$flat && css`
    background: transparent;
    border-color: transparent;
    color: #7d7d80;
  `}
  ${(p) => p.$end && css`align-self: end;`}
`;
const SelectWrap = styled.div`
  display: grid;
  align-items: center;
  & > * { grid-area: 1 / 1; }
  & > svg { justify-self: end; margin-right: 3px; pointer-events: none; }
`;
const Select = styled.select`
  appearance: none;
  width: 100%;
  height: 14px;
  padding: 0 1px;
  border: 1px solid #d3d3d6;
  border-radius: 0;
  background: linear-gradient(90deg, #f7f7f8 calc(100% - 11px), #fff 0);
  font: 8px ${form};
  color: ${c.ink};
`;
const Check = styled.label`
  display: flex;
  align-items: center;
  gap: 2px;
  height: ${(p) => p.$h || 13}px;
  padding-left: ${(p) => p.$in || 0}px;
  white-space: nowrap;
`;
const Tick = styled.input`
  appearance: none;
  flex: none;
  width: 10px;
  height: 10px;
  border: 1px solid #77777a;
  border-radius: 2px;
  background: #f7f7f8;
`;
const CheckGrid = styled.div`
  display: grid;
  grid-template-columns: 85px 1fr;
`;
const CheckBox = ({ text, ...rest }) => (
  <Check {...rest}><Tick type="checkbox" />{text}</Check>
);

const slug = (t) => "f-" + t.toLowerCase().replace(/[^a-z0-9]+/g, "-");
const FieldRow = ({ label, value = "", cols, gap, h, off, ...rest }) => (
  <Row $cols={cols} $gap={gap} $h={h}>
    <Label htmlFor={slug(label)} $off={off}>{label}</Label>
    <Field id={slug(label)} defaultValue={value} disabled={off} {...rest} />
  </Row>
);
const SelectRow = ({ label, value = "", cols, gap, h }) => (
  <Row $cols={cols} $gap={gap} $h={h}>
    <Label htmlFor={slug(label)}>{label}</Label>
    <SelectWrap>
      <Select id={slug(label)} defaultValue={value}><option>{value}</option></Select>
      <Tri w={5} h={3} d="M0 0h5L2.500 3z" fill="#666" />
    </SelectWrap>
  </Row>
);

const TabArea = styled.div`
  display: flex;
`;
const TabList = styled.div`
  width: 14px;
  display: flex;
  flex-direction: column;
  align-items: center;
`;
const Tab = styled.button`
  writing-mode: vertical-rl;
  width: 14px;
  padding: ${(p) => (p.$on ? 5 : 4)}px 0;
  font-size: 9px;
  line-height: 14px;
  color: ${(p) => (p.$on ? "#fff" : "#3a3a3c")};
  background: ${(p) => (p.$on ? c.blue : "transparent")};
  font-weight: ${(p) => (p.$on ? 700 : 400)};
  white-space: nowrap;
`;
const TabArrows = styled.div`
  display: flex;
  flex-direction: column;
  gap: 4px;
`;
const TabPanel = styled.div`
  flex: 1;
  border: 1px solid #3f9fd0;
  padding: 21px 0 39px 6px;
`;
const Rule = styled.hr`
  width: 147px;
  height: 1px;
  margin: 3px 0 5px;
  border: 0;
  background: #55555a;
`;
const StatusRow = styled.div`
  display: grid;
  grid-template-columns: 81px 58px;
  column-gap: 5px;
  align-items: center;
  height: ${(p) => p.$h}px;
`;
const StatusLabel = styled.span`
  text-align: right;
  white-space: nowrap;
`;
const StatusValue = styled.output`
  line-height: 12px;
  color: #77777a;
`;

/* ---------- 3D view ---------- */
const View = styled.section`
  flex: 1;
  min-width: 0;
  display: grid;
  grid-template-columns: minmax(0, 1fr) 10px;
  grid-template-rows: minmax(0, 1fr) 12px;
  border-left: 2px solid #85858a;
  border-top: 2px solid #77777c;
`;
const Canvas = styled.div`
  background: #fff;
  display: flex;
  & > svg { width: 100%; height: 100%; }
`;
const VTrack = styled.div`
  padding: 14px 5px 0 4px;
  background: #f3f3f4;
  &::before { content: ""; display: block; width: 1px; height: 13px; background: #9a9a9d; }
`;
const HTrack = styled.div`
  padding: 5px 0 0 14px;
  background: #f6f6f7;
  &::before { content: ""; display: block; width: 13px; height: 1px; background: #9a9a9d; }
`;
const Grip = styled.div`
  background: radial-gradient(circle at 1px 1px, #a0a0a3 1px, transparent 1px) 0 0 / 3px 3px ${c.face};
  clip-path: polygon(100% 0, 100% 100%, 0 100%);
`;

const Scene = () => (
  <svg viewBox="700 125 474 474" role="img" aria-label="Pipe model">
    <defs>
      <linearGradient id="pipe" gradientUnits="userSpaceOnUse" x1="908" y1="358" x2="924" y2="386">
        <stop offset="0" stopColor="#566574" />
        <stop offset="0.350" stopColor="#617286" />
        <stop offset="0.650" stopColor="#566473" />
        <stop offset="0.900" stopColor="#38424b" />
        <stop offset="1" stopColor="#1d2328" />
      </linearGradient>
      <linearGradient id="ring" gradientUnits="userSpaceOnUse" x1="1068" y1="250" x2="1100" y2="300">
        <stop offset="0" stopColor="#0e9a0e" />
        <stop offset="0.300" stopColor="#22cf22" />
        <stop offset="0.600" stopColor="#12b012" />
        <stop offset="1" stopColor="#067006" />
      </linearGradient>
    </defs>
    <path d="M1083 247l10-4 23 40-9 5z" fill="#d41616" />
    <path d="M1092 244l24 39-4 2-24-39z" fill="#a80d0d" />
    <text x="1101" y="280" fontSize="8" fontFamily={form} fill="#8c1212">10</text>
    <ellipse cx="1084.500" cy="274.500" rx="20.500" ry="28.500" transform="rotate(-30 1084.500 274.500)" fill="url(#ring)" />
    <path d="M1072 254c18-4 30 14 27 34" stroke="#4bf04b" strokeWidth="4" strokeLinecap="round" fill="none" opacity="0.700" />
    <ellipse cx="1077" cy="280" rx="13.500" ry="19.500" transform="rotate(-30 1077 280)" fill="#13b013" stroke="#056605" />
    <path d="M750 449.500L1066 267.500C1076 259 1092 287 1081 296.500L768 476.500z" fill="url(#pipe)" />
    <ellipse cx="757" cy="463.500" rx="10" ry="15" transform="rotate(-22 757 463.500)" fill="#b3c8e4" stroke="#6e8299" strokeWidth="0.700" />
    <text x="1114" y="274" fontSize="9" fontFamily={form} fill="#d03a44">10</text>
    <text x="780" y="467" fontSize="9" fontFamily={form} fill="#8e2a3a">20</text>
    <path d="M984 298v9l2-2 1.500 3.500 1.500-.7-1.500-3.300h2.700z" fill="#fff" stroke="#333" strokeWidth="0.800" />
    <circle cx="737" cy="561" r="12" fill="#d4d4d4" />
    <path d="M737 549c-8 4-8 12 0 24 8-10 8-18 0-24z" fill="#bcbcbc" />
    <g strokeWidth="3" strokeLinecap="round">
      <path d="M737 561l14-8" stroke="#b3541e" />
      <path d="M737 561v-15" stroke="#159b22" />
      <path d="M737 561l-13 6.500" stroke="#8a1515" />
      <path d="M737 561l14 6.500" stroke="#1414b4" />
    </g>
    <circle cx="751" cy="552.500" r="2.500" fill="#c0602a" />
    <circle cx="737" cy="545" r="3" fill="#18b428" />
    <circle cx="724" cy="568" r="3" fill="#e01a1a" />
    <circle cx="751" cy="568" r="3" fill="#14149a" />
    <g fontSize="9" fontFamily={form} textAnchor="middle">
      <text x="737" y="540" fill="#27c93a">Y</text>
      <text x="755" y="550" fill="#c9803c">N</text>
      <text x="719" y="571" fill="#d03030">Z</text>
      <text x="755" y="572" fill="#2626c8">X</text>
    </g>
  </svg>
);

/* ---------- taskbar ---------- */
const Taskbar = styled.footer`
  height: 36px;
  display: flex;
  align-items: center;
  border-top: 1px solid #cfcfd0;
  background: linear-gradient(90deg, #dcdcde 0%, #dedddd 20%, #f3e4da 36%, #fae8dd 55%, #f1e6dd 68%, #e4e2de 82%, #e6e4e0 100%);
`;
const Weather = styled.div`
  width: 177px;
  display: flex;
  align-items: center;
  gap: 4px;
  padding-left: 15px;
  line-height: 12px;
  color: #4c4c4e;
`;
const Badged = styled.span`
  position: relative;
  display: block;
`;
const Badge = styled.span`
  position: absolute;
  top: -4px;
  right: ${(p) => (p.$x ? -5 : -1)}px;
  min-width: 12px;
  height: 12px;
  border-radius: ${(p) => (p.$square ? 3 : 6)}px;
  background: ${(p) => p.$color};
  color: ${(p) => p.$ink || "#fff"};
  font-size: 8px;
  line-height: 12px;
  text-align: center;
`;
const Warm = styled.div`
  color: #2a2a2c;
`;
const Pinned = styled.div`
  display: flex;
  align-items: center;
`;
const AppButton = styled.button`
  position: relative;
  width: 33px;
  height: 34px;
  display: grid;
  place-items: center;
  ${(p) => p.$active && css`background: linear-gradient(#f5f4ec, #f5f4ec) center / 28px 28px no-repeat;`}
  &::after {
    content: "";
    position: absolute;
    bottom: 2px;
    left: calc(50% - ${(p) => (p.$active ? 6 : 3)}px);
    width: ${(p) => (p.$active ? 12 : 6)}px;
    height: 2px;
    border-radius: 1px;
    background: ${(p) => (p.$open ? (p.$active ? "#4d7d7d" : "#8a8583") : "transparent")};
  }
`;
const SearchBox = styled.label`
  width: 163px;
  height: 22px;
  margin: 0 2px 0 3px;
  display: flex;
  align-items: center;
  gap: 6px;
  padding: 0 3px 0 8px;
  border-radius: 11px;
  background: #fafafa;
`;
const SearchInput = styled.input`
  flex: 1;
  min-width: 0;
  border: 0;
  padding: 0;
  background: transparent;
  font-size: 10px;
  &::placeholder { color: #555558; opacity: 1; }
`;
const Tray = styled.div`
  margin-left: auto;
  display: flex;
  align-items: center;
  padding-right: 14px;
`;
const TrayItem = styled.span`
  width: ${(p) => p.$w}px;
  display: grid;
  place-items: center;
`;
const Clock = styled.time`
  width: 57px;
  text-align: right;
  line-height: 12px;
`;

const apps = [
  ["taskView"],
  ["ell"],
  ["folder", 1],
  ["copilot"],
  ["edge", 1],
  ["store"],
  ["chrome"],
  ["linkedin", 1, "16", "#3f6b70"],
  ["spotify", 1],
  ["chrome", 1, "–", "#f2f2f4", "#777"],
  ["zoomApp", 1, "6", "#e2343c"],
  ["c2", 1],
  ["c2", 2],
  ["papp", 1],
  ["calc", 1],
];

const statusRows = [
  ["# of Node Names:", "0/810"],
  ["# of Bends:", "0/3591"],
  ["# of Rigids:", "1/3591", 16],
  ["# of Exp. Joints:", "0/2160"],
  ["# of Restraints:", "1/5400"],
  ["# of Displacements:", "0/3591"],
  ["# of Uniform Loads:", "1/2160"],
  ["# of Flanges:", "0/810", 16],
  ["# of Eqp Limits:", "0/810", 16],
  ["# of Forces/Moments:", "0/3591", 16],
  ["# of Wind Specs:", "1/2160"],
  ["# of Element Offsets:", "0/2160"],
  ["# of Allow Stress", "1/2160", 16],
  ["# of Reducers:", "0/810"],
  ["# of SIFs & Tees:", "0/2700"],
  ["# of Hangers:", "0/2160"],
  ["# of Nozzles:", "0/810"],
];

const near = { cols: "28px 47px", gap: 6 };
const delta = { cols: "28px 66px", gap: 7 };
const prop = { cols: "52px 47px", gap: 2 };
const mod = { cols: "85px 70px", gap: 4 };
const modSel = { cols: "85px 85px", gap: 4 };
const ins = { cols: "79px 70px", gap: 5 };
const insSel = { cols: "79px 85px", gap: 5 };
const wide = { cols: "67px 186px", gap: 4 };

const NodeBox = styled.div`
  display: flex;
  align-items: center;
  gap: 4px;
`;

export default function App() {
  return (
    <Page>
      <Global />
      <Window>
        <TitleBar>
          <Icon name="c2" size={12} />
          <Title>CAESAR II - [D:\Pelatihan Caesar\Training PSA\PSA 22012026\Studi Case]</Title>
          <WindowButtons>
            <WindowButton aria-label="Minimize">
              <svg width="8" height="8" viewBox="0 0 8 8"><path d="M0.500 5h6v2h-6z" fill="#111" /></svg>
            </WindowButton>
            <WindowButton aria-label="Restore">
              <svg width="8" height="8" viewBox="0 0 8 8" fill="none" stroke="#222"><path d="M2.500 2.500v-2h5v4h-2M0.500 3.500h5v4h-5z" /></svg>
            </WindowButton>
            <WindowButton aria-label="Close">
              <svg width="8" height="8" viewBox="0 0 8 8" stroke="#111" strokeWidth="1.800"><path d="M1 1l6 6M7 1L1 7" /></svg>
            </WindowButton>
          </WindowButtons>
        </TitleBar>
        <MenuBar>
          <Handle />
          {["File", "Edit", "Model", "Environment", "Global", "Options", "View", "Tools", "Help"].map((m) => (
            <MenuItem key={m}>{m}</MenuItem>
          ))}
        </MenuBar>
        <ToolRow>
          <Tools items="fresh open save | cut copy paste | print v" />
          <Tools items="nodeA nodeB check v" />
          <Tools items="plt> rig> v" />
          <Tools items="*support> *anchor> *display> delta> hanger> tee | disc elbow> joint teeDown | *axes> *node> | ruler | valve | find v" />
          <Tools items="plate v" />
          <Tools items="burst *refresh v" />
        </ToolRow>
        <ToolRow>
          <Tools items="list | record> run | hopper hopperB | brush v" />
          <Tools items="pulse probe v" />
          <Tools items="sketch boxes *tpost v" />
          <Tools wide items="zoomFit zoomOut zoomBox | rotate spin move plusMinus | *pointer marquee | *shaded hidden wire outline ghost bars v" />
          <Tools items="cubeFront cubeBack | cubeTop cubeBottom | cubeLeft cubeRight | iso> v" />
        </ToolRow>

        <Main>
          <Rail $width={31}>
            <RailHandle />
            <RailTools tight items="column>" />
            <RailMore aria-label="More"><RightTri /></RailMore>
            <RailHandle />
            <RailTools items="first prev next last insert double undo redo" />
            <RailMore aria-label="More"><RightTri /></RailMore>
            <RailHandle />
            <RailTools items="report" />
            <RailLine />
            <RailTools items="breakEl importDb splitPipe" />
            <RailLine />
            <RailTools items="globe loop node10 range rfJoint rfBellow rfAlpha rfSheet redTee" />
            <End $push />
          </Rail>

          <Center>
            <Work>
              <InputPanel>
                <PanelHead>
                  <PanelTitle>Classic Piping Input</PanelTitle>
                  <svg width="7" height="10" viewBox="0 0 7 10" fill="none" stroke="#fff" aria-hidden="true">
                    <path d="M1.500 0.500h4v5h-4zM0 5.500h7M3.500 6v4M4.500 1v4" />
                  </svg>
                </PanelHead>
                <PanelBody onSubmit={(e) => e.preventDefault()}>
                  <Column $gap={4}>
                    <Box $pad="2px 0 0">
                      <More />
                      <NodeBox>
                        <div>
                          <FieldRow label="From:" value="20" h={18} {...near} />
                          <FieldRow label="To:" value="30" h={18} {...near} />
                        </div>
                        <CheckBox text="Name" />
                      </NodeBox>
                    </Box>
                    <Box $pad="5px 0 1px">
                      <More />
                      <FieldRow label="DX:" h={16} {...delta} />
                      <FieldRow label="DY:" h={16} $caret {...delta} />
                      <FieldRow label="DZ:" value="2490.000 mm" h={16} $focus {...delta} />
                      <CheckBox text="Offsets" $h={18} $in={34} />
                    </Box>
                    <Box>
                      <More />
                      <FieldRow label="Diameter:" value="168.2750" h={20} {...prop} />
                      <FieldRow label="Wt/Sch:" value="7.1120" h={18} {...prop} />
                      <CheckBox text="Seam Welded" $h={16} $in={34} />
                      <FieldRow label="WI Factor:" value="1.0000" h={14} $flat readOnly {...prop} />
                      <FieldRow label="-Mill Tol %:" value="12.5000" h={20} {...prop} />
                      <FieldRow label="Corrosion:" value="3.0000" h={18} {...prop} />
                      <FieldRow label="Pipe Den:" value="7833.43994" h={18} {...prop} />
                      <FieldRow label="Fluid Den 1:" value="26.91000" h={16} {...prop} />
                      <FieldRow label="Fluid Den 2:" h={20} off $flat {...prop} />
                      <FieldRow label="Hydro Den:" h={18} off $flat {...prop} />
                    </Box>
                    <Box $pad="8px 0 3px">
                      <More />
                      <FieldRow label="Temp 1:" value="200.0000" h={16} {...prop} />
                      <FieldRow label="Temp 2:" value="115.0000" h={16} {...prop} />
                      <FieldRow label="Temp 3:" h={16} {...prop} />
                      <FieldRow label="Pressure 1:" value="600.0000" h={16} {...prop} />
                      <FieldRow label="Pressure 2:" value="430.0000" h={16} {...prop} />
                      <FieldRow label="Pressure 3:" h={16} {...prop} />
                      <FieldRow label="Hydro Press:" value="900.0000" h={16} {...prop} />
                    </Box>
                  </Column>

                  <Column $gap={1} $top={2}>
                    <Box $strong $pad="2px 0 2px 5px">
                      <CheckGrid>
                        <CheckBox text="Bend" /><CheckBox text="Reducer" />
                        <CheckBox text="Rigid" /><CheckBox text="SIFs & Tees" />
                        <CheckBox text="Expansion Joint" />
                      </CheckGrid>
                    </Box>
                    <Box $strong $pad="2px 0 2px 5px">
                      <CheckGrid>
                        <CheckBox text="Restraints" /><CheckBox text="Displacements" />
                        <CheckBox text="Hangers" /><CheckBox text="Flange Checks" />
                        <CheckBox text="Nozzle Flex." /><CheckBox text="Nozzle Lmt Check" />
                      </CheckGrid>
                    </Box>
                    <Box $strong $pad="1px 0 0 5px">
                      <CheckBox text="Forces/Moments" $h={14} />
                      <CheckBox text="Uniform Loads" $h={14} />
                      <CheckBox text="Wind / Wave" $h={14} />
                    </Box>
                    <Box $mt={5} $pad="5px 0 0">
                      <More />
                      <SelectRow label="Material:" value="(106)A106 Grade B" h={16} cols="38px 132px" gap={4} />
                      <CheckBox text="Allowable Stress" $h={16} $in={5} />
                    </Box>
                    <Box $mt={2} $pad="0 0 4px">
                      <More />
                      <FieldRow label="Elastic Modulus (C):" value="2.9500E+07" h={18} {...mod} />
                      <FieldRow label="Elastic Modulus (H1):" value="2.8800E+07" h={18} {...mod} />
                      <FieldRow label="Elastic Modulus (H2):" value="2.9225E+07" h={18} {...mod} />
                      <FieldRow label="Elastic Modulus (H3):" value="2.9500E+07" h={18} {...mod} />
                      <FieldRow label="Poisson's Ratio:" value="0.2920" h={18} {...mod} />
                    </Box>
                    <Box $mt={2} $pad="1px 0 6px">
                      <More />
                      <FieldRow label="Refract Thk:" h={18} {...mod} />
                      <SelectRow label="Refract Density:" h={16} {...modSel} />
                      <FieldRow label="Insul Thk:" h={18} {...mod} />
                      <FieldRow label="Clad Thk:" h={18} {...mod} />
                      <InnerBox>
                        <SelectRow label="Insulation Density:" h={18} {...insSel} />
                        <FieldRow label="Cladding Density:" h={16} {...ins} />
                        <FieldRow label={"or\nInsul/Cladding\nUnit Weight:"} h={26} $end {...ins} />
                      </InnerBox>
                    </Box>
                  </Column>

                  <Column $gap={8}>
                    <Box $pad="5px 4px 2px">
                      <More />
                      <TabArea>
                        <TabList role="tablist">
                          {["Model Status", "Allowable Stresses", "Bends", "Displacements", "Equipment Limits", "["].map((t, i) => (
                            <Tab key={t} type="button" role="tab" $on={i === 0}>{t}</Tab>
                          ))}
                          <TabArrows>
                            <svg width="5" height="3" viewBox="0 0 5 3" fill="none" stroke="#888" strokeWidth="0.800"><path d="M0.500 2.500L2.500 0.500l2 2z" /></svg>
                            <Tri w={5} h={3} d="M0 0h5L2.500 3z" fill="#555" />
                          </TabArrows>
                        </TabList>
                        <TabPanel role="tabpanel">
                          <StatusRow $h={18}><StatusLabel>Current Element:</StatusLabel><StatusValue>2</StatusValue></StatusRow>
                          <StatusRow $h={18}><StatusLabel>Total Elements:</StatusLabel><StatusValue>2/10800</StatusValue></StatusRow>
                          <Rule />
                          {statusRows.map(([l, v, h = 14]) => (
                            <StatusRow key={l} $h={h}><StatusLabel>{l}</StatusLabel><StatusValue>{v}</StatusValue></StatusRow>
                          ))}
                        </TabPanel>
                      </TabArea>
                    </Box>
                    <Box $pad="4px 0 13px">
                      <SelectRow label="Line Number :" value="unassigned" h={20} {...wide} />
                      <FieldRow label="Element Name :" h={20} {...wide} />
                    </Box>
                  </Column>
                </PanelBody>
              </InputPanel>

              <View>
                <Canvas><Scene /></Canvas>
                <VTrack />
                <HTrack />
                <Grip />
              </View>
            </Work>
            <StatusBar><span>Ready</span><span>Driver: DirectX 11</span><span>NUM</span></StatusBar>
          </Center>

          <Rail $width={32}>
            <RailHandle />
            <RailTools tight items="orbit insert gap renumber flip group" />
            <RailMore aria-label="More"><RightTri /></RailMore>
            <RailHandle />
            <RailTools items="toolbox comment" />
            <RailLine />
            <RailTools items="tank<" />
            <RailLine />
            <RailTools items="scaleA scaleB canBlue" />
            <RailLine />
            <RailTools items="uniform wave" />
            <RailLine />
            <RailTools items="thermo< gauge<" />
            <RailLine />
            <RailTools items="canRed canP flowP canBlueP<" />
            <End $push />
            <RailHandle />
            <RailTools tight items="windows" />
            <End />
          </Rail>
        </Main>

        <ToolRow $end $height={22}>
          <Tools items="fNode fDelta fDot fTemp fBox fE fRho fFlow v" />
          <Tools items="bend> bellows> joint> reducer> teePipe | restraint sheet> flange delta | force windP uniP | cutLine nozzle link paren> v" />
          <Tools items="penA penB penC textCur | note v" />
          <Tools last items="redAxes stretchH stretchV scale v" />
        </ToolRow>

        <Taskbar>
          <Weather>
            <Badged>
              <Icon name="weather" size={19} />
              <Badge $color="#c42b1f">3</Badge>
            </Badged>
            <div><Warm>27°C</Warm><div>Berawan</div></div>
          </Weather>
          <Pinned>
            <AppButton aria-label="Start"><Icon name="win" size={18} /></AppButton>
            <SearchBox>
              <Icon name="magnifier" size={13} />
              <SearchInput placeholder="Search" aria-label="Search" />
              <svg width="37" height="19" viewBox="0 0 37 19" aria-hidden="true">
                <rect width="37" height="19" rx="9.500" fill="#2f6fb5" />
                <path d="M2 13l6-6 5 4 6-7 5 6 6-5 5 6-3 6H6z" fill="#6fa3da" />
                <path d="M4 12l5-2 4 3 6-3 5 2 8-3M8 11h5M17 9h4M25 12h6M10 16h17" stroke="#173f78" strokeWidth="1.500" fill="none" />
                <path d="M12 4h14M6 7h4M27 6h4M15 13h3M22 14h4" stroke="#cfe3f6" />
              </svg>
            </SearchBox>
            {apps.map(([name, state, badge, color, ink], i) => (
              <AppButton key={i} aria-label={name} $open={!!state} $active={state === 2}>
                <Badged>
                  <Icon name={name} size={18} />
                  {badge && <Badge $x $color={color} $ink={ink} $square={name === "zoomApp"}>{badge}</Badge>}
                </Badged>
              </AppButton>
            ))}
          </Pinned>
          <Tray>
            <TrayItem $w={24}><Icon name="up" size={13} /></TrayItem>
            <TrayItem $w={24}><Icon name="sync" size={13} /></TrayItem>
            <TrayItem $w={24}><Icon name="mic" size={15} /></TrayItem>
            <TrayItem $w={34}>ENG</TrayItem>
            <TrayItem $w={20}><Icon name="wifi" size={13} /></TrayItem>
            <TrayItem $w={18}><Icon name="sound" size={13} /></TrayItem>
            <TrayItem $w={20}><Icon name="battery" size={15} /></TrayItem>
            <Clock>19:54<br />26/01/2026</Clock>
          </Tray>
        </Taskbar>
      </Window>
    </Page>
  );
}
